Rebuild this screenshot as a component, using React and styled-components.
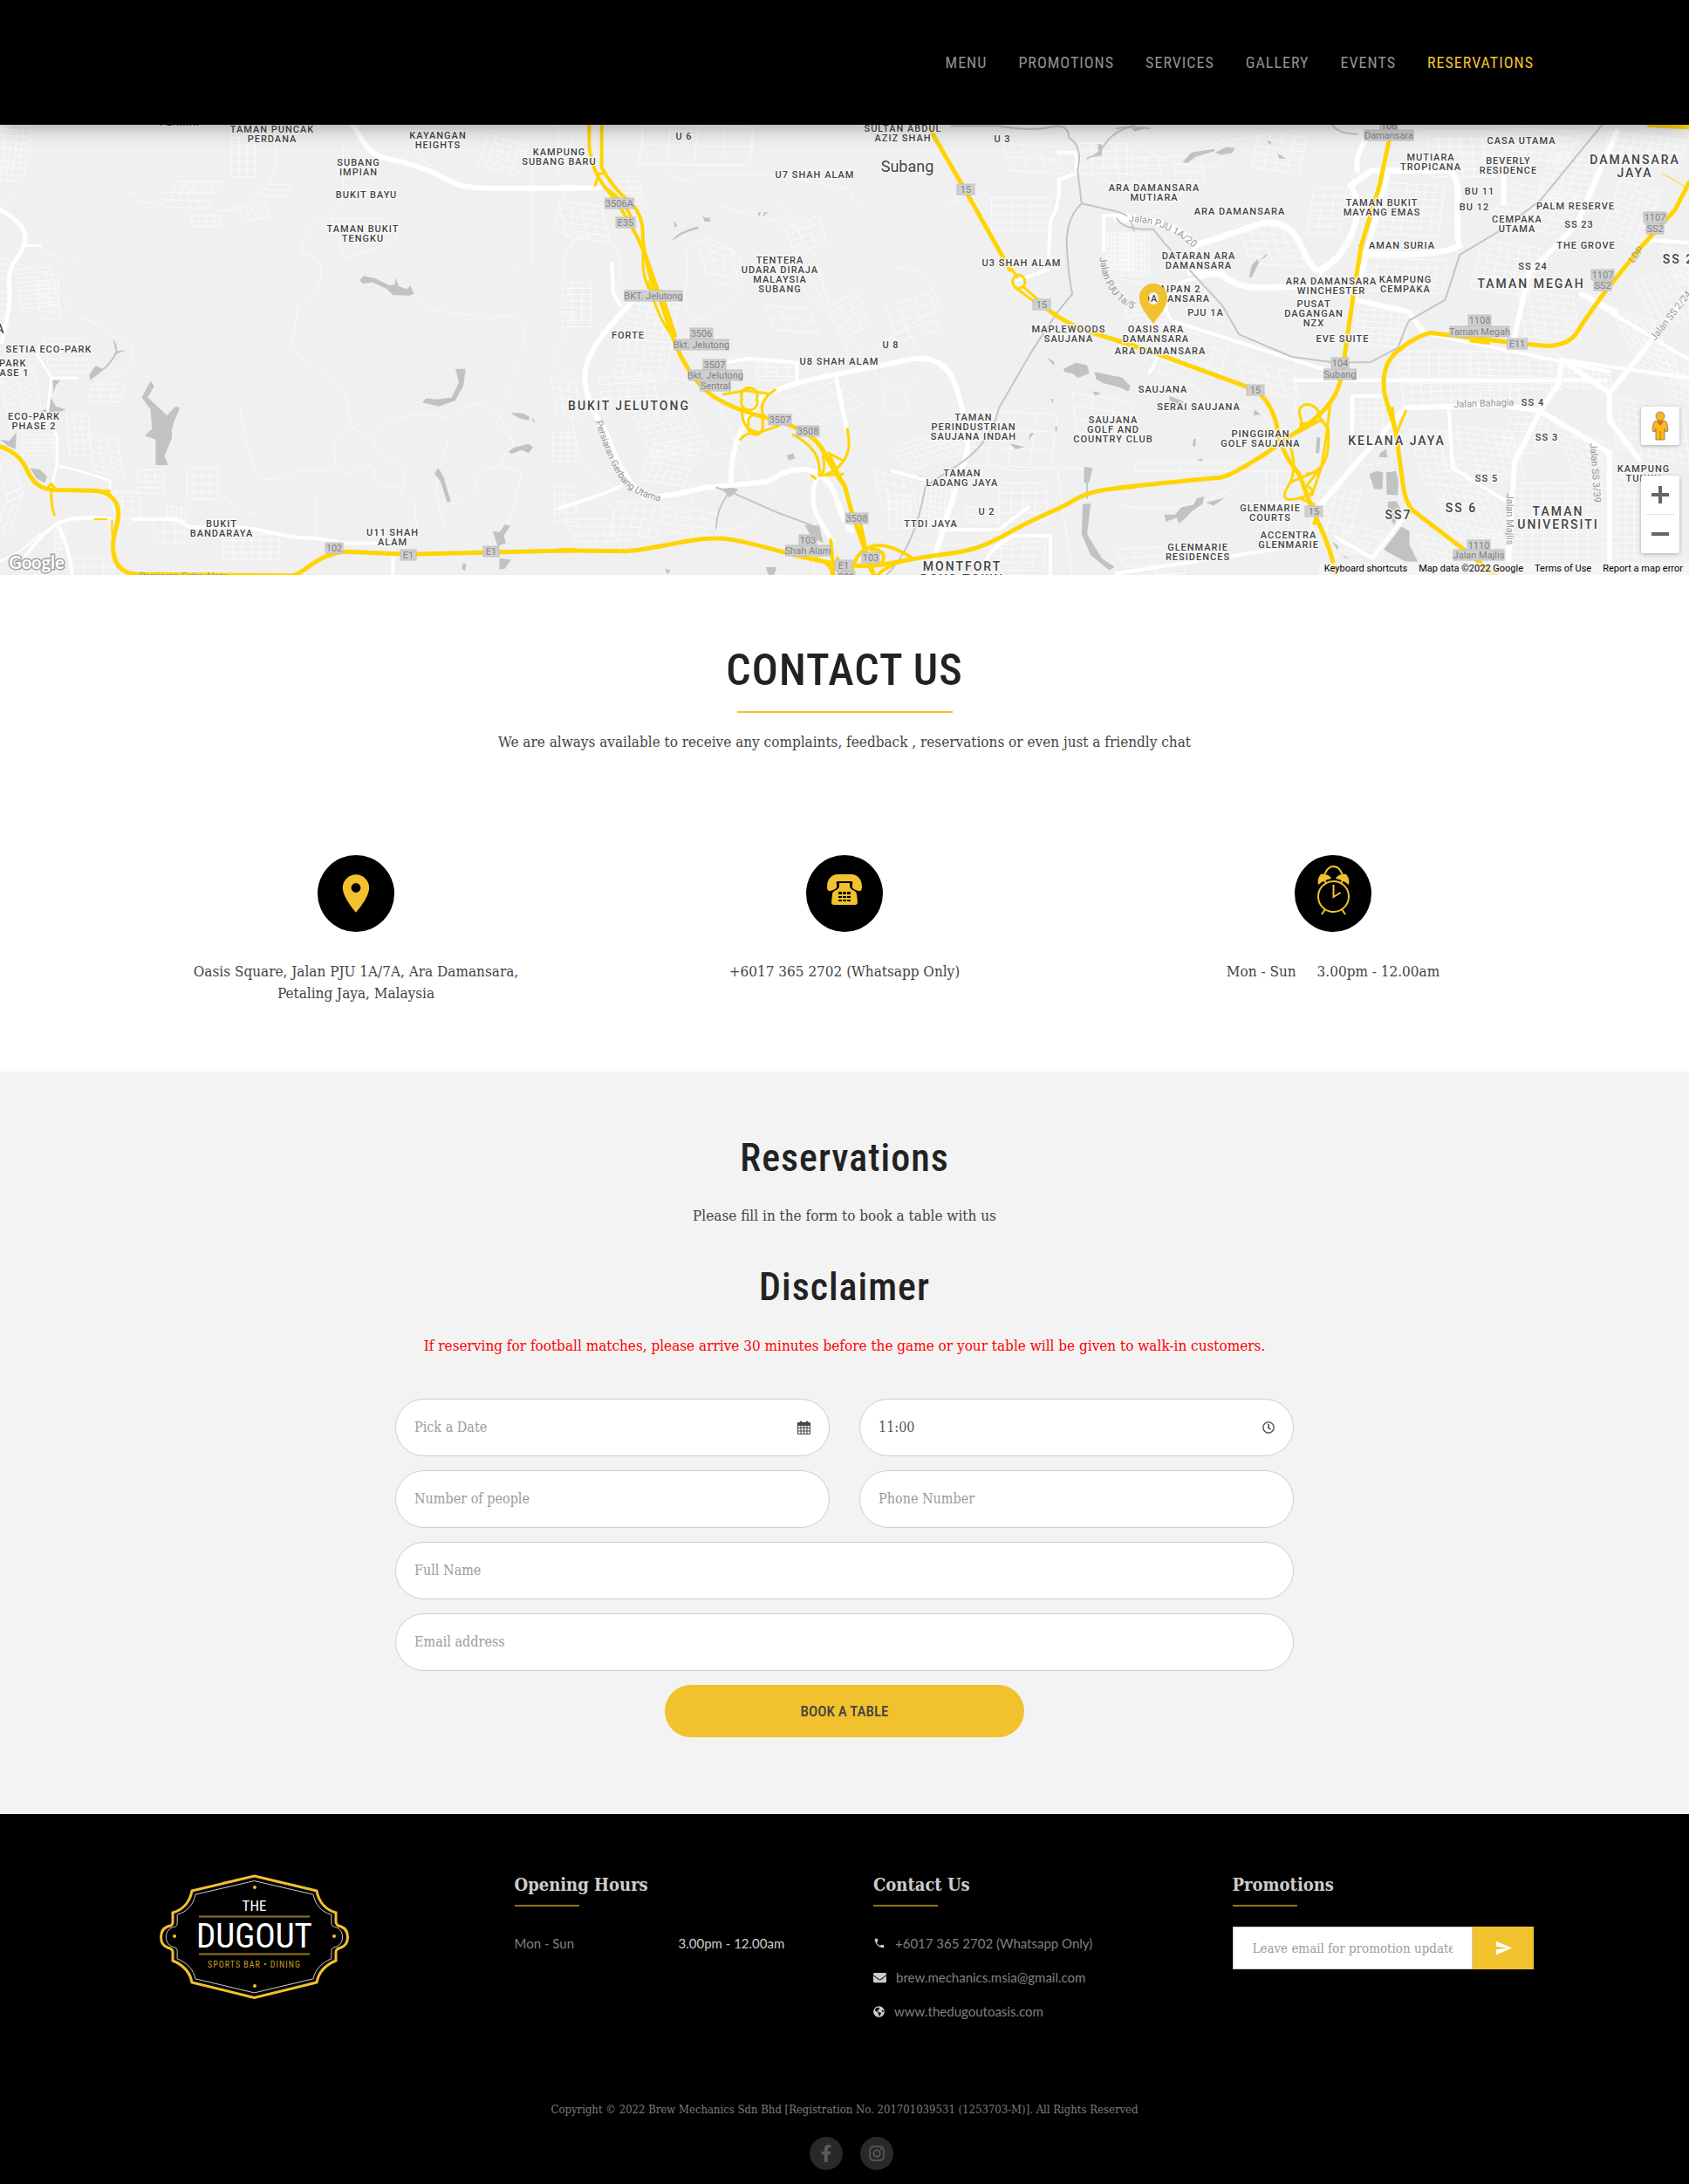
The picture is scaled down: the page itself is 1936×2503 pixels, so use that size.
import React from "react";
import styled, { createGlobalStyle, css } from "styled-components";
import { MdLocationOn, MdSend, MdPhone } from "react-icons/md";
import { FaRegClock, FaEnvelope, FaGlobeAmericas, FaFacebookF, FaInstagram } from "react-icons/fa";

const gold = "#f2c12e";
const sans = `"Roboto Condensed", "Liberation Sans Narrow", Roboto, sans-serif`;
const slab = `"Roboto Slab", "DejaVu Serif Condensed", "DejaVu Serif", serif`;
const lato = `Lato, sans-serif`;

const GlobalStyle = createGlobalStyle`
  *, *::before, *::after { box-sizing: border-box; }
  body { margin: 0; background: #fff; color: #444; font-family: ${slab}; font-size: 15px; }
  h1, h2, h3, p, ul, dl, dd, dt { margin: 0; padding: 0; }
  ul { list-style: none; }
  a { color: inherit; text-decoration: none; }
  input, button { font: inherit; }
  button { cursor: pointer; border: 0; padding: 0; }
`;

/* ---------- header ---------- */

const Header = styled.header`
  position: relative;
  z-index: 1;
  background: #000;
  box-shadow: 0 0 24px rgba(0, 0, 0, 0.4);
`;

const Container = styled.div`
  width: 100%;
  max-width: ${(p) => p.$max}px;
  margin: 0 auto;
`;

const Nav = styled.nav`
  display: flex;
  flex-wrap: wrap;
  justify-content: flex-end;
  gap: 12px 36px;
  padding: 60px 0 59px;
`;

const NavLink = styled.a`
  font: 400 18px/24px ${sans};
  letter-spacing: 1px;
  text-transform: uppercase;
  color: ${(p) => (p.$active ? gold : "#919191")};
`;

const NAV = ["Menu", "Promotions", "Services", "Gallery", "Events", "Reservations"];

/* ---------- map ---------- */

const MapFrame = styled.section`
  position: relative;
  height: 516px;
  background: #f0f0f0;
  overflow: hidden;
`;

const MapArt = styled.svg`
  display: block;
  width: 100%;
  height: 100%;
  font-family: Roboto, sans-serif;
`;

const Line = styled.path`
  fill: none;
  stroke: ${(p) => p.$color || "#fff"};
  stroke-width: ${(p) => p.$w || 1}px;
  stroke-linejoin: round;
  stroke-linecap: round;
  vector-effect: non-scaling-stroke;
`;

const Place = styled.text`
  font-size: ${(p) => (p.$big ? 14 : 11)}px;
  font-weight: 500;
  letter-spacing: ${(p) => (p.$big ? 2 : 1)}px;
  text-anchor: middle;
  fill: #444;
  stroke: rgba(250, 250, 250, 0.85);
  stroke-width: 3px;
  stroke-linejoin: round;
  paint-order: stroke;
`;

const RoadName = styled.text`
  font-size: 11px;
  text-anchor: middle;
  fill: ${(p) => (p.$dark ? "#828282" : "#979797")};
`;

const Controls = styled.div`
  position: absolute;
  right: 11px;
  bottom: 25px;
  display: flex;
  flex-direction: column;
  gap: 35px;
`;

const ControlBox = styled.div`
  display: flex;
  flex-direction: column;
  align-items: center;
  width: 44px;
  background: #fff;
  border-radius: 2px;
  box-shadow: 0 1px 4px rgba(0, 0, 0, 0.3);
`;

const ControlButton = styled.button`
  display: grid;
  place-items: center;
  width: 44px;
  height: 44px;
  background: transparent;
`;

const ControlRule = styled.span`
  width: 32px;
  height: 1px;
  background: #e2e2e2;
`;

const Attribution = styled.div`
  position: absolute;
  right: 0;
  bottom: 0;
  display: flex;
  gap: 13px;
  padding: 0 7px;
  background: rgba(245, 245, 245, 0.7);
  font: 400 11px/14px Roboto, sans-serif;
  color: #000;
`;

const PlainButton = styled.button`
  background: none;
  color: inherit;
`;

/* Each map tile is drawn in its own 1568-unit square. */
const TILES = [
  { x: 0, sx: 0.4209 },
  { x: 640, sx: 0.4209 },
  { x: 1280, sx: 0.4184 },
];
const SY = 0.3444;
const OFFSET_Y = -13;
const tx = (t, x) => Math.round(TILES[t].x + x * TILES[t].sx);
const ty = (y) => Math.round(OFFSET_Y + y * SY);

const grid = (x, y, w, h, nx, ny, skew = 0, lift = 0) => {
  let d = "";
  for (let i = 0; i <= nx; i++) {
    const f = i / nx;
    d += `M${x + w * f} ${y + lift * f}l${skew} ${h}`;
  }
  for (let j = 0; j <= ny; j++) {
    const f = j / ny;
    d += `M${x + skew * f} ${y + h * f}l${w} ${lift}`;
  }
  return d;
};

const MINOR = [
  [
    grid(0, 50, 80, 170, 5, 8, -15, 8), grid(630, 80, 66, 132, 3, 5), grid(440, 262, 120, 50, 5, 2, 10, 4),
    grid(480, 226, 130, 36, 5, 1, -12), grid(520, 338, 80, 40, 4, 2, 6), grid(650, 310, 70, 50, 4, 2, 14, -14),
    grid(730, 236, 70, 38, 3, 2, -20), grid(1330, 70, 110, 100, 5, 5, -30, 40), grid(40, 520, 100, 130, 1, 9, 20, -10),
    grid(100, 530, 56, 150, 2, 6, 10, 10), grid(0, 480, 30, 220, 1, 10, -8, 8), grid(120, 750, 110, 110, 3, 5, 14),
    grid(0, 880, 90, 190, 2, 10, 30, -40), grid(60, 1070, 86, 66, 2, 5), grid(180, 1000, 60, 140, 3, 6, 10),
    grid(240, 1060, 80, 130, 3, 6, 18, 26), grid(250, 900, 90, 60, 3, 3, -10), grid(375, 1186, 70, 78, 3, 4),
    grid(508, 1180, 86, 104, 4, 4), grid(420, 1354, 84, 78, 3, 2), grid(456, 1306, 50, 48, 4, 3, 0, 10),
    grid(610, 1400, 150, 84, 6, 4), grid(0, 1170, 40, 120, 1, 5, 20, -20), grid(0, 1280, 70, 150, 3, 5, -40, -40),
    grid(150, 1390, 30, 60, 2, 3), grid(310, 1260, 70, 90, 3, 3), grid(1505, 1060, 63, 100, 3, 5), grid(1510, 1240, 58, 120, 2, 4),
    grid(200, 1480, 110, 58, 4, 2), grid(1500, 880, 68, 120, 3, 4, 16, 20),
    "M85 38Q90 180 50 240L0 310M750 60V180Q740 240 680 290T580 320M350 262Q380 270 375 296L440 300M935 110V280L900 350Q850 350 830 420T840 470Q890 500 870 560T810 640L795 780Q830 830 880 860T940 930Q950 1010 960 1045L1016 1080Q1050 1010 1130 1005T1220 1020Q1250 980 1290 968T1370 1020L1400 1100M1140 618Q1170 660 1230 664T1325 690Q1370 660 1405 680T1424 780Q1390 900 1355 1030M1450 170V490L1400 515L1394 500M655 980Q660 1050 680 1120T690 1200Q710 1225 760 1215Q800 1180 860 1190T910 1130Q900 1080 965 1045M910 1130Q920 1220 960 1190T1020 1180Q1010 1240 1060 1240T1130 1300L1135 1400M1016 1080Q1020 1140 1070 1160T1090 1280M1220 1040Q1225 1100 1200 1170T1210 1380M1355 1030L1400 1100Q1370 1120 1365 1175Q1300 1180 1300 1230T1200 1310M1365 1175L1420 1190Q1410 1270 1380 1370M1568 60L1520 200M900 350L940 480L1000 460L1085 415L1040 350ZM1130 130Q1160 170 1190 185M1520 38V200L1540 290Q1500 340 1520 380T1568 400M160 560Q170 640 200 650M110 450Q150 490 180 470L220 505M215 680Q280 700 290 730L360 770Q370 840 330 860L250 920M860 1285Q858 1350 860 1410M600 1260Q640 1330 695 1334M1568 420Q1520 470 1540 560T1568 620M1510 660H1560L1530 760L1510 780Q1500 850 1568 870",
  ],
  [
    grid(0, 290, 120, 120, 4, 5, 20, 20), grid(160, 210, 60, 90, 2, 5, 14), grid(200, 610, 130, 120, 5, 6, -20, 20),
    grid(170, 750, 140, 130, 6, 6, -20, 12), grid(110, 880, 150, 90, 6, 4, 10, -10), grid(200, 1010, 150, 140, 7, 7, 60, -40),
    grid(260, 1100, 120, 120, 6, 6, -40, 20), grid(10, 560, 80, 150, 3, 7), grid(380, 430, 90, 100, 3, 4, 20, 20),
    grid(620, 380, 90, 90, 3, 4, 20, -40), grid(540, 830, 110, 60, 4, 4), grid(590, 930, 150, 110, 4, 4, 90, -70),
    grid(740, 640, 70, 110, 3, 5, 40, -50), grid(890, 640, 120, 120, 3, 4, 30, -40), grid(910, 1110, 160, 80, 9, 5, 40, -60),
    grid(860, 1190, 100, 120, 4, 4, 20, 30), grid(990, 1230, 80, 140, 6, 8, -10, 20), grid(900, 1270, 60, 110, 3, 5),
    grid(1200, 1230, 130, 130, 4, 4), grid(1110, 1310, 90, 50, 3, 2), grid(1180, 1400, 150, 120, 5, 5, -10),
    grid(230, 38, 300, 130, 4, 2, -10, 8), grid(1180, 280, 160, 110, 3, 4), grid(1210, 100, 150, 90, 3, 2, 20, 10),
    grid(1420, 100, 130, 100, 4, 4), grid(1495, 398, 73, 120, 7, 8), grid(1400, 930, 160, 130, 3, 3, 10, 30),
    grid(160, 1290, 130, 110, 5, 4, -20, 10), grid(280, 1310, 150, 80, 4, 3, 10, 20), grid(20, 1350, 120, 100, 4, 4, 30),
    grid(560, 640, 120, 80, 3, 2, 30, 10), grid(1130, 990, 230, 180, 4, 3, -20, 10),
    "M230 60Q220 150 300 200T380 200L600 205L700 230L790 250L820 320M380 170H500Q540 130 530 60M30 430Q100 370 145 430T150 630M10 500Q30 420 100 400M440 310L600 360Q760 700 790 800L880 820M650 560Q780 740 850 800M600 300L700 480L740 650M350 460Q380 400 440 430T500 560Q480 640 370 690Q330 640 350 560ZM400 500A50 60 0 1 0 500 520A50 60 0 1 0 400 500M850 800Q930 720 1040 640L1000 530L920 510M860 850Q900 960 960 900T960 740L920 640M880 900L890 1000H960L940 930M260 880Q400 870 440 980T520 1220M360 1230Q360 1350 440 1380T600 1230M340 1240Q370 1120 470 1130M0 330L60 420M1150 1120Q1180 1180 1240 1190L1430 1180M1360 1190L1400 1540M1180 260L1060 300M1240 60Q1300 150 1420 200M1430 200L1568 250M1520 60L1568 150M700 1540L690 1460M930 1400L990 1440L1290 1430M40 1010Q40 1150 110 1220L150 1330Q120 1440 200 1420",
  ],
  [
    grid(10, 400, 80, 140, 7, 8), grid(130, 700, 180, 110, 5, 4, -30, 70), grid(20, 640, 100, 70, 4, 4, 20, -10),
    grid(390, 60, 130, 120, 4, 5, -20, 20), grid(0, 150, 230, 80, 6, 3, 10, -10), grid(330, 370, 150, 130, 5, 5, 40, 10),
    grid(540, 250, 90, 150, 3, 6, -20), grid(720, 230, 180, 170, 7, 7, -20, 10), grid(690, 480, 220, 110, 8, 4, -20, 10),
    grid(850, 60, 180, 150, 6, 6, 10), grid(1090, 50, 180, 100, 7, 4, -40, 10), grid(1080, 230, 180, 130, 6, 6, -60, 40),
    grid(1190, 140, 130, 140, 5, 7, -40, 20), grid(1350, 60, 210, 90, 9, 4, -20, 30), grid(1380, 220, 110, 180, 5, 9, -50, 40),
    grid(1000, 420, 160, 160, 6, 7, -30, 30), grid(1100, 590, 150, 150, 5, 6, 20, 20), grid(1420, 560, 140, 160, 7, 6, 60, -60),
    grid(1350, 640, 120, 220, 6, 10, 90, 50), grid(1490, 440, 78, 120, 4, 5, 50, 30), grid(660, 650, 140, 120, 6, 6, -10, 10),
    grid(770, 790, 200, 90, 7, 4), grid(960, 790, 250, 120, 9, 6, 10, 10), grid(1220, 830, 130, 80, 8, 5, 10, 10),
    grid(650, 940, 80, 110, 4, 5), grid(780, 900, 320, 80, 12, 3, 6, -6), grid(800, 1050, 130, 180, 5, 8, 40, 10),
    grid(930, 1040, 150, 150, 6, 7, 40, 20), grid(1080, 1010, 110, 120, 5, 5, -30), grid(1200, 1040, 150, 180, 6, 8, 60, 60),
    grid(1080, 1230, 240, 290, 8, 14), grid(1330, 1250, 110, 270, 5, 12), grid(860, 1230, 170, 180, 8, 7, 60, 40),
    grid(820, 1400, 110, 120, 5, 5, 50, 30), grid(560, 1240, 110, 140, 5, 5, -30, 20), grid(640, 1370, 120, 80, 5, 4, -40, 30),
    grid(1350, 940, 200, 180, 9, 7, 20, 50), grid(1480, 780, 88, 160, 4, 7, 30, 30), grid(330, 820, 150, 90, 4, 3, 20, 40),
    grid(50, 1160, 370, 30, 3, 1), grid(410, 1190, 60, 260, 2, 5), grid(0, 1450, 160, 90, 4, 3, 30, -10), grid(980, 1400, 100, 130, 4, 5),
    "M30 60Q60 130 180 170T300 90L420 70M60 340Q160 330 200 220T330 60M200 640Q300 700 490 820V1000M0 550Q90 570 180 590M300 740L480 940M110 860Q200 880 260 960L360 980Q420 1000 440 1060M640 950V1180L740 1160M620 1230L560 1300L640 1410M880 1050L900 1180L1020 1280M0 1300Q160 1350 330 1240",
  ],
];

const MAJOR = [
  [
    [6, "M960 38C990 90 1000 140 1060 152S1170 190 1210 215S1270 248 1330 249H1568"],
    [5, "M0 320C70 370 75 400 65 440S20 500 25 570S22 660 5 760"],
    [3, "M65 440H110M100 800L140 880H210M140 880L130 990L155 1075V1170L142 1235M155 1172L205 1185L300 1222V1260"],
    [4, "M60 1490Q110 1400 155 1365Q200 1338 300 1348M155 1365Q190 1440 196 1540M365 1350H480L520 1378Q640 1366 720 1390T860 1414L940 1430H1060M1070 1460V1540"],
    [2, "M110 1400Q60 1460 0 1490"],
  ],
  [
    [6, "M0 248H110M205 620L160 680Q70 800 72 880T130 1060Q170 1210 230 1270Q250 1290 400 1245L570 1225Q640 1170 690 1190T760 1290T800 1390M470 1225Q470 1120 500 1050T560 940Q620 900 750 870L960 818Q1050 800 1080 900T1115 1120Q1060 1330 1010 1540"],
    [5, "M755 870L785 1050M705 1210Q680 1290 710 1350T745 1420"],
    [4, "M0 1315Q120 1270 170 1240M1040 1385H1200L1280 1310M1160 1500Q1180 1440 1240 1405H1340V1540M1335 480L1340 360Q1370 290 1362 220L1410 200V130H1360M1250 555L1335 520M450 830L520 815L650 830V890M910 1190L1000 1220M1568 340H1485V460M170 640L150 600L145 500"],
  ],
  [
    [7, "M0 350L100 360Q180 380 215 440L400 365Q470 350 505 440T550 520Q600 510 640 410T640 240L700 190H880Q940 170 935 300T940 440Q880 480 680 465M290 540Q330 580 400 580L640 570"],
    [6, "M215 440L200 530L290 535M560 530L600 480M745 190L650 620L800 660L840 730M660 190Q650 130 700 60M1060 200V300"],
    [6, "M1370 60L1260 370L1130 530L1090 740M1350 930L1220 820L1210 900L1160 990L1050 970L790 980L680 1130L560 1300M1160 990L1350 1130V1540M1160 990L1090 1160L1070 1540M1350 930V1020L1430 1150M1350 930L1568 600"],
    [4, "M840 730L1350 860M1220 820L1568 880M490 888H1340M645 940H730M645 940V1060M90 860Q110 830 110 800M150 690Q110 620 180 560L290 530M150 690L590 860M790 1340L700 1480L600 1410M0 1530L440 1450M1568 430L1450 420M1270 600L1568 820M1280 600L1370 660M910 980L920 1180L1080 1300"],
  ],
];

const HIGHWAYS = [
  [
    [5, "M0 1108C40 1125 60 1150 75 1190S110 1250 150 1253L250 1255C300 1255 325 1290 322 1340S305 1400 308 1450S330 1530 370 1533L800 1538C840 1520 860 1470 940 1458L1110 1467L1568 1454"],
    [3, "M140 1255Q138 1300 148 1335M130 1245L140 1232L150 1248M270 1258L298 1256"],
    [2, "M258 1350H290M305 1355V1400"],
  ],
  [
    [4, "M84 38V110Q90 190 130 250T210 400T260 590M118 38V180Q150 250 190 290T230 400T262 590M130 250Q190 300 205 370"],
    [5, "M225 430L270 590L305 720Q330 820 380 895T560 1010T720 1120T780 1240L800 1330L860 1540"],
    [3, "M232 440Q225 530 245 580M245 560Q270 680 310 740M280 590L320 740M100 240L110 200H130M450 935L510 922L570 932M590 920Q540 960 560 1010M500 990Q500 1050 540 1060M495 1085Q510 1060 545 1062L600 1040"],
    [3, "M500 950A22 26 0 1 1 540 950A22 26 0 1 1 500 950M518 1035A20 26 0 1 1 556 1035A20 26 0 1 1 518 1035M787 1050Q800 1120 775 1160T715 1205M735 1130L775 1155M740 1140L780 1240M720 1140Q730 1180 715 1205L775 1200M690 1205L700 1215M640 1070Q720 1120 710 1205M725 1130L770 1215"],
    [5, "M0 1454L180 1457C280 1450 380 1400 470 1418S620 1470 740 1495S900 1495 1000 1476S1130 1462 1220 1400S1360 1320 1400 1290S1480 1250 1568 1242"],
    [4, "M742 1420L750 1540M760 1480Q770 1540 800 1520Q810 1460 850 1442T960 1476M850 1450Q900 1450 880 1500M870 1535Q900 1500 960 1480M700 1480Q750 1500 745 1540M820 1350L850 1520"],
    [5, "M1005 38L1110 260L1230 520M1320 640Q1390 710 1480 740L1568 772"],
    [3, "M1230 510L1250 545M1237 560A17 22 0 1 1 1271 560A17 22 0 1 1 1237 560M1245 580L1300 630M1265 575L1325 640"],
  ],
  [
    [5, "M748 80L720 240L670 440L650 590L625 800V840L610 900Q590 990 480 1070L410 1130Q310 1210 280 1212T0 1246"],
    [5, "M0 755L100 795L380 920Q430 970 440 1050T500 1200L540 1330Q590 1450 600 1540"],
    [3, "M500 1060L560 1020L580 1050V1090Q580 1190 520 1200M585 970L570 1110L560 1180L535 1270M470 1090Q500 1180 470 1240T500 1280T520 1240L555 1185M480 1225L550 1190M500 1280L540 1300M545 1340L540 1365H555M550 1000L580 1050"],
    [3, "M500 1060Q510 1030 502 1005C495 975 515 965 530 970S550 985 558 1003M510 1032L545 1028"],
    [5, "M1040 1540L950 1450L810 1320Q790 1290 785 1240L765 1060L735 940Q720 840 770 790T860 730L1100 765L1180 774Q1240 770 1260 730T1340 590L1440 440L1530 320L1568 230"],
    [3, "M768 1060L792 990M755 980L765 1060M805 1325L790 1345M970 758L1020 765M665 440L672 450"],
    [1, "M1495 200L1560 245"],
    [6, "M1460 38L1568 44"],
  ],
];

const RAILS = [
  [],
  [[2, "M1070 42H1200Q1290 60 1340 46T1390 80Q1430 110 1414 190L1425 300Q1380 350 1385 450T1400 600L1360 660L1290 790L1200 980Q1180 1090 1100 1160L1000 1240Q970 1450 890 1540"], [2, "M1425 300Q1500 320 1530 330T1568 390M1440 150Q1470 140 1490 100T1568 40M430 1245L470 1260L600 1330L690 1370M430 1380Q430 1320 460 1270M1440 1190V1280"]],
  [[2, "M0 350Q20 390 100 385L130 430L290 640L335 735L480 810L590 828H695L770 780L800 690L900 620L940 470L1050 390L1160 290L1330 38M590 38Q610 70 660 68M0 50Q40 40 90 50"]],
];

const WATER = [
  [
    "M980 555L990 541L1020 548L1060 572L1075 570L1078 547L1086 575L1108 585L1118 573L1127 600L1115 606L1070 605L1055 585L1015 562L988 567Z",
    "M308 752Q322 770 318 790L342 788L318 800Q300 840 280 855L246 888L243 870L260 840L280 850Q310 815 315 790Z",
    "M410 890L420 908L402 945L455 1005L478 975L490 980L475 1022L468 1050V1080L448 1140L458 1170H424V1085L394 1072L414 1050L410 985L386 945Z",
    "M1240 850L1268 850L1262 905L1240 955L1195 975L1150 962L1160 948L1190 952L1230 945L1250 895Z",
    "M143 888H165L152 905L146 930ZM138 945L152 975L180 985L160 995L108 992L135 980ZM0 1085L25 1090L45 1060L42 1118L20 1105ZM82 1180L108 1185L128 1208L122 1230L100 1215Z",
    "M1183 1198L1194 1180L1208 1210L1220 1260L1228 1290L1218 1295L1200 1225ZM1390 995L1425 998L1442 1010L1440 1022L1410 1012ZM1450 1010L1458 1027L1450 1025ZM1385 1125L1400 1112L1440 1100L1452 1110L1440 1130L1420 1120L1392 1133ZM1342 1390L1360 1393L1375 1368L1390 1372L1372 1405L1378 1430L1355 1440ZM1360 1480L1392 1485L1375 1515L1360 1518ZM1260 1497L1270 1500L1266 1522L1258 1515Z",
  ],
  [
    "M310 424Q320 395 380 376L382 384Q340 395 310 424ZM392 336L400 348L412 346L414 360L398 360ZM543 330L552 328L546 345ZM560 330L572 328L556 345ZM315 358L325 375L316 378Z",
    "M1375 850L1410 830L1440 838L1446 865L1415 880L1400 865L1380 862ZM1460 860L1500 870L1535 878L1556 905V922L1510 905L1485 898L1465 885ZM1455 925L1478 930L1462 940ZM1330 812L1350 825V840Z",
    "M440 1247L462 1242L490 1250L480 1265L465 1278L455 1262ZM670 1368L710 1372L722 1430L690 1410ZM970 1215L985 1205L1000 1225ZM1230 1098L1270 1110L1245 1118ZM622 1138L640 1130L645 1148L628 1155ZM565 1510H595L588 1535H572ZM290 1515L305 1520L298 1535Z",
    "M1432 1175L1455 1180L1445 1230L1432 1230ZM1428 1300L1450 1298L1440 1400L1480 1480L1515 1510L1500 1520L1450 1470L1425 1400ZM1470 100L1482 105L1480 140L1456 145L1470 128ZM1342 950H1350L1345 965ZM1352 1042H1360L1355 1065ZM1285 1065L1296 1062L1280 1090Z",
  ],
  [
    "M180 162L205 130L265 118L270 125L215 145L195 165ZM270 130L300 112L325 115L315 132L285 138ZM440 132L465 150L445 150ZM412 88L425 95L418 105ZM40 50L90 45L50 60Z",
    "M362 545L370 505L385 485L390 495L370 545ZM390 490L412 465L408 478ZM0 888L38 905L30 925L0 905ZM145 940L185 960L170 975L145 955ZM378 985L396 1003L375 1005Z",
    "M130 1335L160 1335L178 1310L210 1302L220 1280L240 1275L235 1300L205 1325L185 1350L170 1365L165 1345L135 1358ZM245 1295L295 1280L265 1305ZM548 1075L558 1080L555 1130L545 1130ZM210 1085L217 1082L215 1110L208 1105ZM220 1155L232 1148L236 1158Z",
    "M692 1200L712 1190L730 1195L728 1250L705 1250ZM738 1195L765 1190L772 1225L770 1270L740 1268ZM722 1130L738 1115L742 1145L718 1143ZM742 1292L765 1290L778 1315L760 1370L745 1340ZM732 1450L780 1375L802 1390V1435L825 1492L790 1490L735 1455ZM590 1425L608 1440L605 1455ZM618 1470L640 1480L625 1478Z",
  ],
];

const PLACES = [
  [0, 490, 42, "PERMAI"], [0, 741, 64, "TAMAN PUNCAK", "PERDANA"], [0, 1193, 83, "KAYANGAN", "HEIGHTS"],
  [0, 976, 173, "SUBANG", "IMPIAN"], [0, 998, 282, "BUKIT BAYU"], [0, 988, 394, "TAMAN BUKIT", "TENGKU"],
  [0, 133, 796, "SETIA ECO-PARK"], [0, 20, 841, "O-PARK", "PHASE 1"], [0, 92, 1019, "ECO-PARK", "PHASE 2"],
  [0, 604, 1375, "BUKIT", "BANDARAYA"], [0, 1068, 1405, "U11 SHAH", "ALAM"], [0, 1524, 140, "KAMPUNG", "SUBANG BARU"],
  [1, 342, 86, "U 6"], [1, 938, 61, "SULTAN ABDUL", "AZIZ SHAH"], [1, 1210, 97, "U 3"], [1, 698, 214, "U7 SHAH ALAM"],
  [1, 603, 500, "TENTERA", "UDARA DIRAJA", "MALAYSIA", "SUBANG"], [1, 1262, 507, "U3 SHAH ALAM"],
  [1, 190, 750, "FORTE"], [1, 906, 781, "U 8"], [1, 765, 837, "U8 SHAH ALAM"], [1, 1391, 730, "MAPLEWOODS", "SAUJANA"],
  [1, 1131, 1023, "TAMAN", "PERINDUSTRIAN", "SAUJANA INDAH"], [1, 1100, 1207, "TAMAN", "LADANG JAYA"],
  [1, 1166, 1335, "U 2"], [1, 1015, 1375, "TTDI JAYA"], [1, 1512, 1032, "SAUJANA", "GOLF AND", "COUNTRY CLUB"],
  [2, 102, 257, "ARA DAMANSARA", "MUTIARA"], [2, 338, 336, "ARA DAMANSARA"], [2, 225, 486, "DATARAN ARA", "DAMANSARA"],
  [2, 165, 594, "TAIPAN 2", "DAMANSARA"], [2, 243, 675, "PJU 1A"], [2, 107, 729, "OASIS ARA", "DAMANSARA"],
  [2, 120, 802, "ARA DAMANSARA"], [2, 126, 930, "SAUJANA"], [2, 224, 987, "SERAI SAUJANA"],
  [2, 395, 1077, "PINGGIRAN", "GOLF SAUJANA"], [2, 420, 1324, "GLENMARIE", "COURTS"], [2, 470, 1415, "ACCENTRA", "GLENMARIE"],
  [2, 222, 1456, "GLENMARIE", "RESIDENCES"], [2, 1108, 103, "CASA UTAMA"], [2, 860, 157, "MUTIARA", "TROPICANA"],
  [2, 1073, 169, "BEVERLY", "RESIDENCE"], [2, 994, 271, "BU 11"], [2, 980, 322, "BU 12"], [2, 1257, 318, "PALM RESERVE"],
  [2, 727, 309, "TAMAN BUKIT", "MAYANG EMAS"], [2, 1096, 364, "CEMPAKA", "UTAMA"], [2, 1267, 379, "SS 23"],
  [2, 781, 451, "AMAN SURIA"], [2, 1287, 451, "THE GROVE"], [2, 1139, 521, "SS 24"],
  [2, 587, 568, "ARA DAMANSARA", "WINCHESTER"], [2, 790, 564, "KAMPUNG", "CEMPAKA"], [2, 540, 646, "PUSAT", "DAGANGAN", "NZX"],
  [2, 619, 762, "EVE SUITE"], [2, 1140, 974, "SS 4"], [2, 1179, 1090, "SS 3"], [2, 1014, 1226, "SS 5"],
  [2, 1444, 1193, "KAMPUNG", "TUNKU"],
];

const TOWNS = [
  [0, 2, 733, "A"], [1, 193, 986, "BUKIT JELUTONG"], [1, 1100, 1521, "MONTFORT", "BOYS TOWN"],
  [2, 1420, 169, "DAMANSARA", "JAYA"], [2, 1136, 580, "TAMAN MEGAH"], [2, 1550, 498, "SS 22"], [2, 768, 1103, "KELANA JAYA"],
  [2, 943, 1328, "SS 6"], [2, 773, 1350, "SS7"], [2, 1210, 1338, "TAMAN", "UNIVERSITI"],
];

const SHIELDS = [
  [0, 909, 1445, 20, "102"], [0, 1113, 1468, 18, "E1"], [0, 1338, 1458, 18, "E1"],
  [1, 166, 300, 33, "3506A"], [1, 184, 362, 22, "E35"], [1, 258, 608, 66, "BKT. Jelutong"],
  [1, 390, 733, 26, "3506"], [1, 390, 769, 62, "Bkt. Jelutong"], [1, 426, 835, 26, "3507"], [1, 427, 871, 61, "Bkt. Jelutong"],
  [1, 427, 907, 35, "Sentral"], [1, 604, 1020, 26, "3507"], [1, 680, 1058, 26, "3508"], [1, 813, 1348, 26, "3508"],
  [1, 679, 1420, 20, "103"], [1, 679, 1456, 51, "Shah Alam"], [1, 850, 1478, 20, "103"], [1, 778, 1503, 20, "E1"], [1, 783, 1542, 20, "301"],
  [1, 1109, 253, 20, "15"], [1, 1316, 635, 20, "15"],
  [2, 745, 40, 20, "106"], [2, 745, 73, 56, "Damansara"], [2, 380, 919, 20, "15"], [2, 540, 1324, 20, "15"],
  [2, 612, 831, 20, "104"], [2, 612, 867, 37, "Subang"], [2, 995, 688, 26, "1108"], [2, 995, 725, 68, "Taman Megah"],
  [2, 1096, 768, 23, "E11"], [2, 1474, 346, 26, "1107"], [2, 1474, 382, 20, "SS2"], [2, 1332, 536, 26, "1107"], [2, 1332, 572, 20, "SS2"],
  [2, 992, 1436, 26, "1110"], [2, 992, 1470, 58, "Jalan Majlis"],
];

const ROAD_NAMES = [
  [2, 1006, 975, -2, "Jalan Bahagia"], [2, 1430, 475, -52, "LDP"], [2, 1525, 680, -52, "Jalan SS 2/24"],
  [2, 1302, 1195, 86, "Jalan SS 3/39"], [2, 1068, 1350, 90, "Jalan Majlis"],
];

const Tile = ({ index, children }) => (
  <g transform={`translate(${TILES[index].x} ${OFFSET_Y}) scale(${TILES[index].sx} ${SY})`}>{children}</g>
);

const Labels = ({ items, big }) =>
  items.map(([t, x, y, ...lines], i) => (
    <Place key={i} $big={big}>
      {lines.map((line, n) => (
        <tspan key={n} x={tx(t, x)} y={ty(y) + n * (big ? 15 : 11)}>
          {line}
        </tspan>
      ))}
    </Place>
  ));

function CityMap() {
  return (
    <MapArt viewBox="0 0 1936 516" preserveAspectRatio="xMidYMid slice" role="img" aria-label="Map of Ara Damansara and surroundings">
      {TILES.map((_, i) => (
        <Tile key={i} index={i}>
          {MINOR[i].map((d, n) => <Line key={n} d={d} $color="#fafafa" $w={1} />)}
          {WATER[i].map((d, n) => <path key={n} d={d} fill="#c1c3c2" />)}
          {MAJOR[i].map(([w, d], n) => <Line key={n} d={d} $w={w} />)}
          {RAILS[i].map(([w, d], n) => <Line key={n} d={d} $w={w} $color="#c4c5c5" />)}
        </Tile>
      ))}
      {TILES.map((_, i) => (
        <Tile key={i} index={i}>
          {HIGHWAYS[i].map(([w, d], n) => <Line key={n} d={d} $w={w} $color="#ffd400" />)}
        </Tile>
      ))}
      {SHIELDS.map(([t, x, y, w, text], i) => (
        <g key={i}>
          <rect x={tx(t, x) - w / 2} y={ty(y) - 6} width={w} height="12" fill="#cfcfcf" stroke="#c0c0c0" />
          <RoadName $dark x={tx(t, x)} y={ty(y) + 4}>{text}</RoadName>
        </g>
      ))}
      {ROAD_NAMES.map(([t, x, y, turn, text], i) => (
        <RoadName key={i} transform={`translate(${tx(t, x)} ${ty(y)}) rotate(${turn})`}>{text}</RoadName>
      ))}
      <path id="gerbang" d="M681 335C692 370 704 402 718 414S745 430 762 432" fill="none" />
      <path id="pju20" d="M1288 112Q1335 108 1372 145" fill="none" />
      <path id="pju5" d="M1260 146C1262 175 1270 200 1304 214" fill="none" />
      <path id="setia" d="M142 511Q152 521 168 521H280" fill="none" />
      <RoadName><textPath href="#gerbang" startOffset="50%">Persiaran Gerbang Utama</textPath></RoadName>
      <RoadName><textPath href="#pju20" startOffset="50%">Jalan PJU 1A/20</textPath></RoadName>
      <RoadName><textPath href="#pju5" startOffset="50%">Jalan PJU 1a/5</textPath></RoadName>
      <RoadName><textPath href="#setia" startOffset="50%">Persiaran Setia Alam</textPath></RoadName>
      <Labels items={PLACES} />
      <Labels items={TOWNS} big />
      <text x="1040" y="54" textAnchor="middle" fontSize="18" fill="#444" stroke="#f6f6f6" strokeWidth="3" paintOrder="stroke">Subang</text>
      <path fill={gold} fillRule="evenodd" d="M1322 182c-9 0-16 7-16 16 0 11 9 20 16 30 7-10 16-19 16-30 0-9-7-16-16-16zm0 10a6 7 0 1 1 0 14 6 7 0 0 1 0-14z" />
      <text x="42" y="509" textAnchor="middle" fontFamily="Lato, sans-serif" fontSize="20" fontWeight="700" fill="#fff" stroke="#a3a3a3" strokeWidth="3" paintOrder="stroke">Google</text>
    </MapArt>
  );
}

const Pegman = () => (
  <svg width="20" height="34" viewBox="0 0 20 34" aria-hidden="true">
    <path d="M6 11h8q3 0 4 4l1 8-3 1-1-4v13H5V20l-1 4-3-1 1-8q1-4 4-4z" fill="#fbb917" stroke="#7d7360" strokeWidth=".8" />
    <path d="M6 12h8l-4 5z" fill="#e2681d" />
    <circle cx="10" cy="6" r="5" fill="#fbb917" stroke="#7d7360" strokeWidth=".8" />
    <path d="M10 23v10" stroke="#b07b0c" />
  </svg>
);

/* ---------- contact ---------- */

const Contact = styled.section`
  padding: 79px 0 77px;
  text-align: center;
  background: #fff;
`;

const Title = styled.h1`
  font: 500 50px/60px ${sans};
  letter-spacing: 1px;
  text-transform: uppercase;
  color: #222;

  &::after {
    content: "";
    display: block;
    width: 247px;
    height: 2px;
    margin: 17px auto 20px;
    background: ${gold};
  }
`;

const Copy = styled.p`
  font-size: 17px;
  line-height: 26px;
  color: ${(p) => (p.$alert ? "#ff0000" : "#444")};
`;

const ContactGrid = styled.div`
  display: grid;
  grid-template-columns: repeat(3, 1fr);
  margin-top: 117px;
`;

const ContactItem = styled.div`
  display: flex;
  flex-direction: column;
  align-items: center;
  gap: 33px;
  font-size: 17px;
  line-height: 25px;
`;

const Disc = styled.div`
  display: grid;
  place-items: center;
  width: 88px;
  height: 88px;
  border-radius: 50%;
  background: #000;
  color: ${gold};
`;

const Hours = styled.div`
  display: flex;
  gap: 24px;
`;

const Telephone = () => (
  <svg width="40" height="50" viewBox="0 0 40 50" aria-hidden="true">
    <path fill="currentColor" d="M0 17C0 8 6 3 12 3h16c6 0 12 5 12 14 0 3-1 5-2 5-4 0-8-2-9-4-1-3 2-6-1-7H12c-3 1 0 4-1 7-1 2-5 4-9 4-1 0-2-2-2-5z" />
    <path fill="currentColor" fillRule="evenodd" d="M14 13h12v4c1 5 8 4 8 9l1 9q0 3-3 3H8q-3 0-3-3l1-9c0-5 7-4 8-9zM13 23v3h4v-3zm5 0v3h4v-3zm5 0v3h4v-3zM13 28v2h4v-2zm5 0v2h4v-2zm5 0v2h4v-2zM13 32v2h4v-2zm5 0v2h4v-2zm5 0v2h4v-2z" />
  </svg>
);

const AlarmClock = () => (
  <svg width="88" height="88" viewBox="0 0 88 88" fill="none" stroke="currentColor" strokeWidth="2" aria-hidden="true">
    <circle cx="44.500" cy="47.500" r="17.500" />
    <path d="M33 26C36 17 39 13 44.500 13S53 17 56 26M44.500 34v14l8-5M35 62l-4 6M54 62l4 6M36 32l-2-3M53 32l2-3" />
    <path fill="currentColor" stroke="none" d="M30 22c6-1 11 2 12 5-6 1-10 3-15 7-1-4 0-9 3-12zM59 22c-6-1-11 2-12 5 6 1 10 3 15 7 1-4 0-9-3-12z" />
  </svg>
);

/* ---------- reservations ---------- */

const Booking = styled.section`
  padding: 74px 0 88px;
  background: #f3f3f3;
  text-align: center;
`;

const Heading = styled.h2`
  font: 500 44px/50px ${sans};
  letter-spacing: 1px;
  color: #222;
  margin: ${(p) => (p.$follow ? "44px 0 29px" : "0 0 28px")};
`;

const Form = styled.form`
  display: grid;
  grid-template-columns: 1fr 1fr;
  gap: 16px 34px;
  margin-top: 48px;
`;

const Hidden = styled.span`
  position: absolute;
  width: 1px;
  height: 1px;
  overflow: hidden;
  clip-path: inset(50%);
`;

const FieldShell = styled.label`
  display: flex;
  align-items: center;
  grid-column: ${(p) => (p.$full ? "1 / -1" : "auto")};
  height: 66px;
  padding: 0 21px;
  border: 1px solid #cecece;
  border-radius: 33px;
  background: #fff;
  color: #444;
`;

const inputText = css`
  min-width: 0;
  flex: 1;
  border: 0;
  outline: 0;
  padding: 0;
  background: transparent;
  font-family: ${slab};
  color: #555;

  &::placeholder {
    color: #9b9b9b;
    opacity: 1;
  }
`;

const FieldInput = styled.input`
  ${inputText}
  font-size: 16px;
  line-height: 24px;
`;

const Submit = styled.button`
  grid-column: 1 / -1;
  justify-self: center;
  width: 40%;
  height: 60px;
  border-radius: 30px;
  background: ${gold};
  color: #444;
  font: 500 17px/24px ${sans};
  text-transform: uppercase;
`;

const CalendarIcon = () => (
  <svg width="15" height="16" viewBox="0 0 15 16" aria-hidden="true">
    <path fill="currentColor" fillRule="evenodd" d="M1 2h2V1q1-1 2 0v1h5V1q1-1 2 0v1h2q1 0 1 1v12q0 1-1 1H1q-1 0-1-1V3q0-1 1-1zM1 6v2h2.500V6zm3.500 0v2H7V6zM8 6v2h2.500V6zm3.500 0v2H14V6zM1 9v2.500h2.500V9zm3.500 0v2.500H7V9zM8 9v2.500h2.500V9zm3.500 0v2.500H14V9zM1 12.500V15h2.500v-2.500zm3.500 0V15H7v-2.500zm3.500 0V15h2.500v-2.500zm3.500 0V15H14v-2.500z" />
  </svg>
);

const Field = ({ label, full, icon, ...rest }) => (
  <FieldShell $full={full}>
    <Hidden>{label}</Hidden>
    <FieldInput {...rest} />
    {icon}
  </FieldShell>
);

/* ---------- footer ---------- */

const Footer = styled.footer`
  padding: 69px 0 17px;
  background: #000;
`;

const FooterGrid = styled.div`
  display: grid;
  grid-template-columns: repeat(4, 1fr);
  gap: 66px;
  align-items: start;
`;

const FooterTitle = styled.h3`
  font: 700 20px/24px ${slab};
  color: #ccc;

  &::after {
    content: "";
    display: block;
    width: 74px;
    height: 2px;
    margin-top: 11px;
    background: #94761c;
  }
`;

const HoursRow = styled.dl`
  display: grid;
  grid-template-columns: 188px 1fr;
  margin-top: 30px;
  font: 400 15px/24px ${lato};
  color: #808080;

  dd { color: #ccc; }
`;

const ContactList = styled.ul`
  display: flex;
  flex-direction: column;
  gap: 15px;
  margin-top: 30px;
  font: 400 15px/24px ${lato};
  color: #808080;
`;

const ContactLink = styled.a`
  display: flex;
  align-items: center;
  gap: 11px;

  svg { color: #ccc; }
`;

const Newsletter = styled.form`
  display: flex;
  height: 49px;
  margin-top: 23px;
`;

const NewsletterLabel = styled.label`
  display: flex;
  flex: 1;
  min-width: 0;
  padding: 0 22px;
  border: 1px solid #ccc;
  background: #fff;
`;

const NewsletterInput = styled.input`
  ${inputText}
  font-size: 15px;
`;

const SendButton = styled.button`
  display: grid;
  place-items: center;
  width: 70px;
  background: ${gold};
  color: #fff;
`;

const Copyright = styled.p`
  margin-top: 89px;
  text-align: center;
  font-size: 13px;
  line-height: 24px;
  color: #7d7d7d;
`;

const Socials = styled.div`
  display: flex;
  justify-content: center;
  gap: 20px;
  margin-top: 19px;
  padding-left: 16px;
`;

const SocialLink = styled.a`
  display: grid;
  place-items: center;
  width: 38px;
  height: 38px;
  border-radius: 50%;
  background: #292929;
  color: #5c5c5c;
`;

const LogoLink = styled.a`
  display: block;
  padding-left: 5px;
`;

const badge =
  "M108.500 2L180 19C182 31 190 41 202 44V55C203 60 206 59 208 60C218 64 218 80 208 84C204 85 202 86 202 89V99C190 104 182 113 180 124L108.500 141.500L37 124C35 113 27 104 15 99V89C15 86 13 85 9 84C-1 80 -1 64 9 60C11 59 15 60 15 55V44C27 41 35 31 37 19Z";

const LogoText = styled.text`
  font-family: ${sans};
  font-size: ${(p) => p.$size}px;
  letter-spacing: ${(p) => (p.$spaced ? 1 : 0)}px;
  text-anchor: middle;
  fill: ${(p) => p.$color || "#fff"};
`;

const Logo = () => (
  <svg width="217" height="143" viewBox="0 0 217 143" role="img" aria-label="The Dugout Sports Bar and Dining">
    <path d={badge} fill="none" stroke={gold} strokeWidth="3" />
    <path d={badge} fill="none" stroke="#ddd" strokeWidth="1" transform="translate(108.500 71.750) scale(.945 .92) translate(-108.500 -71.750)" />
    <g fill={gold}>
      <circle cx="109" cy="15" r="2" /><circle cx="109" cy="128" r="2" />
      <circle cx="17" cy="71" r="2" /><circle cx="200" cy="71" r="2" />
    </g>
    <path d="M45 48.500H172M45 91.500H172" stroke="#94761c" strokeWidth="2" />
    <LogoText x="108.500" y="42" $size={17}>THE</LogoText>
    <LogoText x="108.500" y="84" $size={39}>DUGOUT</LogoText>
    <LogoText x="108.500" y="107" $size={10} $spaced $color="#c79c20">SPORTS BAR • DINING</LogoText>
  </svg>
);

export default function App() {
  const stop = (e) => e.preventDefault();
  return (
    <>
      <GlobalStyle />
      <Header>
        <Container $max={1580}>
          <Nav>
            {NAV.map((item) => (
              <NavLink key={item} href={`#${item.toLowerCase()}`} $active={item === "Reservations"}>{item}</NavLink>
            ))}
          </Nav>
        </Container>
      </Header>

      <MapFrame>
        <CityMap />
        <Controls>
          <ControlBox>
            <ControlButton type="button" aria-label="Street View"><Pegman /></ControlButton>
          </ControlBox>
          <ControlBox>
            <ControlButton type="button" aria-label="Zoom in">
              <svg width="20" height="20" viewBox="0 0 20 20"><path d="M10 0v20M0 10h20" stroke="#666" strokeWidth="4" /></svg>
            </ControlButton>
            <ControlRule />
            <ControlButton type="button" aria-label="Zoom out">
              <svg width="20" height="20" viewBox="0 0 20 20"><path d="M0 10h20" stroke="#666" strokeWidth="4" /></svg>
            </ControlButton>
          </ControlBox>
        </Controls>
        <Attribution>
          <PlainButton type="button">Keyboard shortcuts</PlainButton>
          <span>Map data ©2022 Google</span>
          <a href="#terms">Terms of Use</a>
          <a href="#report">Report a map error</a>
        </Attribution>
      </MapFrame>

      <Contact>
        <Container $max={1680}>
          <Title>Contact Us</Title>
          <Copy>We are always available to receive any complaints, feedback , reservations or even just a friendly chat</Copy>
          <ContactGrid>
            <ContactItem>
              <Disc><MdLocationOn size={52} /></Disc>
              <p>Oasis Square, Jalan PJU 1A/7A, Ara Damansara,<br />Petaling Jaya, Malaysia</p>
            </ContactItem>
            <ContactItem>
              <Disc><Telephone /></Disc>
              <p>+6017 365 2702 (Whatsapp Only)</p>
            </ContactItem>
            <ContactItem>
              <Disc><AlarmClock /></Disc>
              <Hours><span>Mon - Sun</span><span>3.00pm - 12.00am</span></Hours>
            </ContactItem>
          </ContactGrid>
        </Container>
      </Contact>

      <Booking>
        <Container $max={1030}>
          <Heading>Reservations</Heading>
          <Copy>Please fill in the form to book a table with us</Copy>
          <Heading $follow>Disclaimer</Heading>
          <Copy $alert>If reserving for football matches, please arrive 30 minutes before the game or your table will be given to walk-in customers.</Copy>
          <Form onSubmit={stop}>
            <Field label="Date" placeholder="Pick a Date" icon={<CalendarIcon />} />
            <Field label="Time" defaultValue="11:00" icon={<FaRegClock size={14} />} />
            <Field label="Number of people" placeholder="Number of people" />
            <Field label="Phone number" type="tel" placeholder="Phone Number" />
            <Field label="Full name" full placeholder="Full Name" />
            <Field label="Email address" type="email" full placeholder="Email address" />
            <Submit type="submit">Book a table</Submit>
          </Form>
        </Container>
      </Booking>

      <Footer>
        <Container $max={1580}>
          <FooterGrid>
            <LogoLink href="#home"><Logo /></LogoLink>
            <div>
              <FooterTitle>Opening Hours</FooterTitle>
              <HoursRow><dt>Mon - Sun</dt><dd>3.00pm - 12.00am</dd></HoursRow>
            </div>
            <div>
              <FooterTitle>Contact Us</FooterTitle>
              <ContactList>
                <li><ContactLink href="tel:+60173652702"><MdPhone size={14} />+6017 365 2702 (Whatsapp Only)</ContactLink></li>
                <li><ContactLink href="mailto:brew.mechanics.msia@gmail.com"><FaEnvelope size={15} />brew.mechanics.msia@gmail.com</ContactLink></li>
                <li><ContactLink href="#site"><FaGlobeAmericas size={13} />www.thedugoutoasis.com</ContactLink></li>
              </ContactList>
            </div>
            <div>
              <FooterTitle>Promotions</FooterTitle>
              <Newsletter onSubmit={stop}>
                <NewsletterLabel>
                  <Hidden>Email for promotions</Hidden>
                  <NewsletterInput type="email" placeholder="Leave email for promotion updates" />
                </NewsletterLabel>
                <SendButton type="submit" aria-label="Send"><MdSend size={21} /></SendButton>
              </Newsletter>
            </div>
          </FooterGrid>
          <Copyright>Copyright © 2022 Brew Mechanics Sdn Bhd [Registration No. 201701039531 (1253703-M)]. All Rights Reserved</Copyright>
          <Socials>
            <SocialLink href="#facebook" aria-label="Facebook"><FaFacebookF size={20} /></SocialLink>
            <SocialLink href="#instagram" aria-label="Instagram"><FaInstagram size={20} /></SocialLink>
          </Socials>
        </Container>
      </Footer>
    </>
  );
}
